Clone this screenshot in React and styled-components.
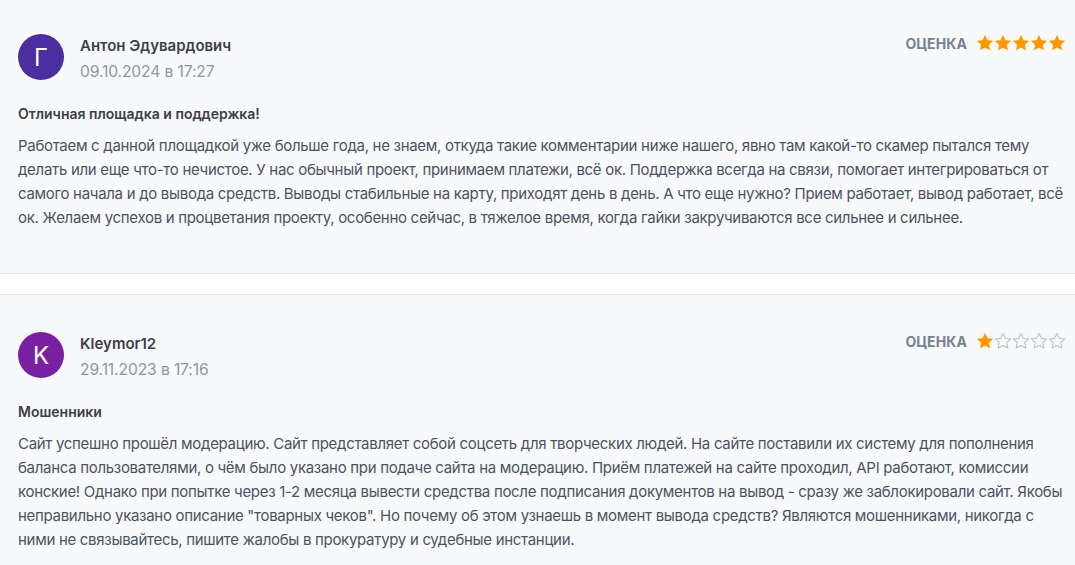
import React from 'react';
import styled, { createGlobalStyle } from 'styled-components';

const GlobalStyle = createGlobalStyle`
  html, body {
    margin: 0;
    padding: 0;
    background: #ffffff;
  }
  body {
    font-family: Inter, "Noto Sans", "DejaVu Sans", sans-serif;
  }
`;

const reviews = [
  {
    id: 1,
    letter: 'Г',
    color: '#4b2ea0',
    name: 'Антон Эдувардович',
    date: '09.10.2024 в 17:27',
    rating: 5,
    title: 'Отличная площадка и поддержка!',
    text: 'Работаем с данной площадкой уже больше года, не знаем, откуда такие комментарии ниже нашего, явно там какой-то скамер пытался тему делать или еще что-то нечистое. У нас обычный проект, принимаем платежи, всё ок. Поддержка всегда на связи, помогает интегрироваться от самого начала и до вывода средств. Выводы стабильные на карту, приходят день в день. А что еще нужно? Прием работает, вывод работает, всё ок. Желаем успехов и процветания проекту, особенно сейчас, в тяжелое время, когда гайки закручиваются все сильнее и сильнее.',
  },
  {
    id: 2,
    letter: 'K',
    color: '#7b1fa2',
    name: 'Kleymor12',
    date: '29.11.2023 в 17:16',
    rating: 1,
    title: 'Мошенники',
    text: 'Сайт успешно прошёл модерацию. Сайт представляет собой соцсеть для творческих людей. На сайте поставили их систему для пополнения баланса пользователями, о чём было указано при подаче сайта на модерацию. Приём платежей на сайте проходил, API работают, комиссии конские! Однако при попытке через 1-2 месяца вывести средства после подписания документов на вывод - сразу же заблокировали сайт. Якобы неправильно указано описание "товарных чеков". Но почему об этом узнаешь в момент вывода средств? Являются мошенниками, никогда с ними не связывайтесь, пишите жалобы в прокуратуру и судебные инстанции.',
  },
];

const List = styled.div`
  display: flex;
  flex-direction: column;
  gap: 20px;
  margin-top: -4px;
`;

const Card = styled.article`
  background: #f8f9fb;
  border-top: 1px solid #e3e5e8;
  border-bottom: 1px solid #e3e5e8;
  padding: 37px 9px 43px 18px;
`;

const Header = styled.div`
  display: flex;
  justify-content: space-between;
  align-items: flex-start;
`;

const Author = styled.div`
  display: flex;
  align-items: flex-start;
  gap: 16px;
`;

const Avatar = styled.div`
  width: 46px;
  height: 46px;
  border-radius: 50%;
  background: ${(p) => p.color};
  color: #ffffff;
  display: flex;
  align-items: center;
  justify-content: center;
  font-size: 24px;
  font-weight: 400;
`;

const Meta = styled.div`
  display: flex;
  flex-direction: column;
  gap: 6px;
  padding-top: 2px;
`;

const Name = styled.div`
  font-size: 15px;
  font-weight: 600;
  color: #3b4048;
  line-height: 20px;
`;

const Date = styled.div`
  font-size: 15.6px;
  color: #8a97a4;
  line-height: 20px;
  letter-spacing: -0.1px;
`;

const Rating = styled.div`
  display: flex;
  align-items: center;
  gap: 9px;
`;

const RatingLabel = styled.span`
  font-size: 14px;
  font-weight: 700;
  color: #76838f;
  letter-spacing: 0.1px;
`;

const Stars = styled.div`
  display: flex;
`;

const Title = styled.h3`
  margin: 22px 0 0;
  font-size: 14px;
  font-weight: 600;
  color: #3b4048;
  line-height: 20px;
`;

const Body = styled.p`
  margin: 10px 0 0;
  max-width: 1045px;
  font-size: 15px;
  line-height: 24px;
  letter-spacing: -0.3px;
  color: #4c5360;
`;

const Star = ({ filled }) => (
  <svg width="18" height="18" viewBox="0 0 24 24">
    <path
      d="M12 1.8l3.1 6.6 7.2.9-5.3 5 1.4 7.1L12 17.9l-6.4 3.5 1.4-7.1-5.3-5 7.2-.9z"
      fill={filled ? '#ff9800' : 'none'}
      stroke={filled ? '#ff9800' : '#b9c0c7'}
      strokeWidth={filled ? 0.5 : 1.4}
      strokeLinejoin="round"
    />
  </svg>
);

const Review = ({ review }) => (
  <Card>
    <Header>
      <Author>
        <Avatar color={review.color}>{review.letter}</Avatar>
        <Meta>
          <Name>{review.name}</Name>
          <Date>{review.date}</Date>
        </Meta>
      </Author>
      <Rating>
        <RatingLabel>ОЦЕНКА</RatingLabel>
        <Stars>
          {[1, 2, 3, 4, 5].map((n) => (
            <Star key={n} filled={n <= review.rating} />
          ))}
        </Stars>
      </Rating>
    </Header>
    <Title>{review.title}</Title>
    <Body>{review.text}</Body>
  </Card>
);

export default function App() {
  return (
    <>
      <GlobalStyle />
      <List>
        {reviews.map((r) => (
          <Review key={r.id} review={r} />
        ))}
      </List>
    </>
  );
}
